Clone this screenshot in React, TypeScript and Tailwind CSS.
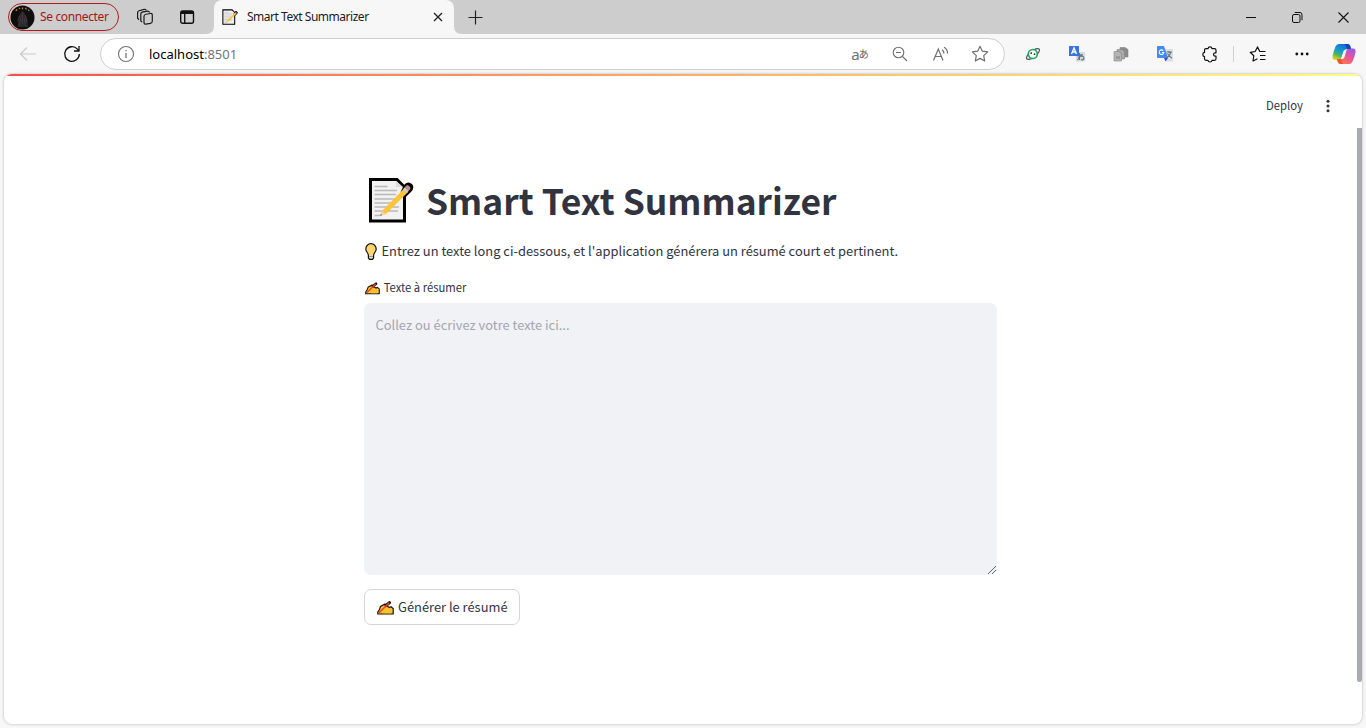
import type { ReactNode } from "react";

const UI = "font-['Noto_Sans','Open_Sans',sans-serif]";
const SOURCE = "font-['Noto_Sans_CJK_SC',sans-serif]";

function MemoIcon({ className }: { className: string }) {
  return (
    <svg viewBox="0 0 46 46" className={className} fill="none">
      <path d="M2.500 2.500H29L36.500 10V44H2.500Z" fill="#f2f2f2" stroke="#000" strokeWidth="3" />
      <path d="M28 4V10H35" fill="#dcdcdc" />
      <path d="M6.500 9.500H19.500M6.500 13.500H29M6.500 17.500H28M6.500 22H27M6.500 26H27M6.500 30H31M6.500 34H30M6.500 38.500H12" stroke="#b9b9b9" strokeWidth="1.500" />
      <path d="M34 15L37 9Q40 5 43.500 8.500Q45 11 42 14L36 20Z" fill="#000" stroke="#000" strokeWidth="2.600" />
      <path d="M14 34L36 11.500L40 15L18 37L12 39Z" fill="#fcc438" />
      <path d="M14 34L18 37L12 39Z" fill="#f5cfb5" />
      <path d="M12 39L14 38L13 37Z" fill="#555" />
      <path d="M35 12.500L37 10L41 13.500L39 16Z" fill="#c8c8c8" />
      <path d="M37 10Q39 7 41.500 9.500Q43.500 11.500 41 13.500Z" fill="#c98d88" />
    </svg>
  );
}

function BulbIcon({ className }: { className: string }) {
  return (
    <svg viewBox="0 0 12 17" className={className}>
      <path d="M6 .7A5.200 5.200 0 0 0 .8 5.900C.8 8.700 3.200 9.700 3.400 12.500V15L4.500 16.300H7.500L8.600 15V12.500C8.800 9.700 11.200 8.700 11.200 5.900A5.200 5.200 0 0 0 6 .7Z" fill="#ffd66b" stroke="#111" strokeWidth="1.200" />
      <path d="M4 12H8V15H4Z" fill="#d9d9d9" />
      <path d="M4 13.500H8" stroke="#777" strokeWidth=".7" />
    </svg>
  );
}

function WritingHandIcon({ className }: { className: string }) {
  return (
    <svg viewBox="0 0 17 14" className={className}>
      <path d="M.8 13V11L2.500 8.500L3.500 5.500L8 3L10 5L12.500 6.500L14 5.800L16.200 7.500V13Z" fill="#fcc22f" stroke="#17120c" strokeWidth="1.200" />
      <path d="M9 4.500L12.500 1.600" stroke="#17120c" strokeWidth="3" strokeLinecap="round" />
      <path d="M1.600 12.200L12.200 1.900" stroke="#ee432b" strokeWidth="1.500" />
      <path d="M6.500 12.300L7.200 9.500L10.500 8L9.500 10.500H14V12.300Z" fill="#fcc22f" />
    </svg>
  );
}

function Slot({ className, children }: { className: string; children: ReactNode }) {
  return <div className={`flex h-6 shrink-0 items-center justify-center ${className}`}>{children}</div>;
}

function Avatar() {
  return (
    <svg viewBox="0 0 26 26" className="ml-px size-[25px] shrink-0">
      <circle cx="13" cy="13" r="12.500" fill="#100d0d" />
      <path d="M8 23L9 12L11 8Q13 5 15 8L17 12L19 23Z" fill="#2a282b" />
      <path d="M10 11L8 17M16 11L18 18M13 9V20M11 14L10 21M15 14L16 21" stroke="#454348" strokeWidth=".8" />
      <path d="M6 6L7.500 4.500M9.500 4L10.500 3M13 2.500V4.500M16 3L17 4.500M19 5L20 6" stroke="#b9882f" strokeWidth="1.300" />
      <path d="M10.500 12H12M14 12H15.500" stroke="#552324" />
    </svg>
  );
}

function TabStrip() {
  return (
    <div className="flex h-[34px] shrink-0 bg-[#cdcdcd]">
      <div className="flex w-[214px] shrink-0 items-center pl-2">
        <div className="flex h-7 w-[111px] shrink-0 items-center rounded-full border border-[#b01c20] text-[12px] text-[#a41619]">
          <Avatar />
          <span className="ml-[5px] whitespace-nowrap tracking-[-0.36px]">Se connecter</span>
        </div>
        <svg viewBox="0 0 18 18" className="ml-[17px] size-[18px]" fill="none" stroke="#1b1b1b" strokeWidth="1.200" strokeLinecap="round">
          <rect x="8" y="6" width="8.300" height="9.800" rx="1.800" transform="skewY(-9) translate(0 1.800)" />
          <path d="M5.800 13.700L4.800 13V6Q4.800 4.600 6.200 4.200L11.500 3.100Q13 2.900 13.300 4.200" />
          <path d="M2.700 11.300L1.600 10.300V4.600Q1.600 3.200 3 2.700L8.200 1.300Q9.600 1 10 2" />
        </svg>
        <svg viewBox="0 0 16 16" className="ml-[25px] size-4" fill="none" stroke="#111" strokeWidth="1.400">
          <rect x="1.700" y="1.900" width="12.800" height="12.400" rx="2" />
          <path d="M2 3.500H14.500" strokeWidth="3" />
          <path d="M5.700 4V14" />
        </svg>
      </div>
      <div className="relative flex w-60 shrink-0 items-center rounded-t-[8px] bg-[#f7f7f7] pl-2">
        <svg viewBox="0 0 8 8" className="absolute bottom-0 -left-2 size-2"><path d="M8 0V8H0Q8 8 8 0Z" fill="#f7f7f7" /></svg>
        <svg viewBox="0 0 8 8" className="absolute -right-2 bottom-0 size-2"><path d="M0 0V8H8Q0 8 0 0Z" fill="#f7f7f7" /></svg>
        <MemoIcon className="size-4" />
        <span className="ml-[9px] w-[186px] whitespace-nowrap text-[12px] tracking-[-0.48px] text-[#1b1b1b]">Smart Text Summarizer</span>
        <svg viewBox="0 0 10 10" className="size-[10px]" stroke="#222" strokeWidth="1.300"><path d="M1 1L9 9M9 1L1 9" /></svg>
      </div>
      <div className="flex flex-1 items-center pl-[14px]">
        <svg viewBox="0 0 15 15" className="size-[15px]" stroke="#222" strokeWidth="1.200"><path d="M7.500 .5V14.500M.5 7.500H14.500" /></svg>
      </div>
      <div className="flex items-center pr-[17px]">
        <svg viewBox="0 0 10 10" className="size-[10px]" stroke="#111"><path d="M0 5.500H10" /></svg>
        <svg viewBox="0 0 11 11" className="ml-9 size-[11px]" fill="none" stroke="#111"><rect x=".5" y="2.500" width="7.500" height="8" rx="1.500" /><path d="M2.800 .5H8Q10 .5 10 3V8.200" /></svg>
        <svg viewBox="0 0 11 11" className="ml-[35px] size-[11px]" stroke="#111" strokeWidth="1.100"><path d="M.5 .5L10.500 10.500M10.500 .5L.5 10.500" /></svg>
      </div>
    </div>
  );
}

function AddressBar() {
  return (
    <div className="flex h-8 w-[905px] shrink-0 items-center rounded-full border border-[#cecfd1] bg-white pl-4">
      <svg viewBox="0 0 18 18" className="size-[18px]" fill="none" stroke="#717171" strokeWidth="1.100">
        <circle cx="9" cy="9" r="7.500" /><path d="M9 8V13M9 5V6.300" strokeWidth="1.300" />
      </svg>
      <span className="ml-[14px] w-[697px] pt-px text-[13px] text-[#737373]"><span className="text-black">localhost</span>:8501</span>
      <Slot className="w-7">
        <span className="-mt-px text-[15px] leading-5 text-[#707070]">a</span><span className="-ml-px font-['Noto_Sans_CJK_JP',sans-serif] text-[10px] leading-5 text-[#606060]">あ</span>
      </Slot>
      <Slot className="ml-3 w-7">
        <svg viewBox="0 0 16 16" className="size-4" fill="none" stroke="#707070" strokeWidth="1.100"><circle cx="6.500" cy="6.500" r="5.300" /><path d="M4 6.500H9M10.500 10.500L15 15" /></svg>
      </Slot>
      <Slot className="ml-3 w-7">
        <svg viewBox="0 0 18 16" className="ml-0.5 h-4 w-[18px]" fill="none" stroke="#707070" strokeWidth="1.200"><path d="M1.500 14.500L6.300 3L11 14.500M3.200 10.500H9.400M10 3.700Q12 5 12 7.500M12 1.300Q15.800 3.500 15.500 7.500" /></svg>
      </Slot>
      <Slot className="ml-3 w-7">
        <svg viewBox="0 0 18 18" className="size-[18px]" fill="none" stroke="#707070" strokeWidth="1.200" strokeLinejoin="round"><path d="M9 1.300L11.300 6.200L16.700 6.900L12.700 10.600L13.700 16L9 13.400L4.300 16L5.300 10.600L1.300 6.900L6.700 6.200Z" /></svg>
      </Slot>
    </div>
  );
}

function TranslateTile() {
  return (
    <svg viewBox="0 0 16 16" className="size-4">
      <rect x="7" y="6" width="9" height="9.500" fill="#d8dce0" />
      <rect width="10" height="10" fill="#3775e4" />
      <path d="M2.500 8L5 2L7.500 8M3.500 6H6.500" fill="none" stroke="#fff" strokeWidth="1.300" />
      <path d="M8 9H14M10.500 7V14M13 8L8.500 14M8.500 11Q15 9 15 12Q15 14 12 14" fill="none" stroke="#5b7585" strokeWidth="1.100" />
    </svg>
  );
}

function GoogleTranslate() {
  return (
    <svg viewBox="0 0 16 16" className="size-4">
      <path d="M6 3H16V15.500H9Z" fill="#dedede" />
      <path d="M0 1Q0 0 1 0H7L11 12H1Q0 12 0 11Z" fill="#4488f5" />
      <path d="M7 12H11L8.500 15.500Z" fill="#304fbc" />
      <path d="M6.300 4.700A2.300 2.300 0 1 0 6.800 6.500H4.800" fill="none" stroke="#fff" strokeWidth="1.100" />
      <path d="M9.500 6H15M12 5V7M14 6Q13 10 9.500 12M10.500 7.500Q12 10.500 15 12" fill="none" stroke="#607784" strokeWidth="1.100" />
    </svg>
  );
}

function Copilot() {
  return (
    <svg viewBox="0 0 24 22" className="h-[22px] w-6">
      <defs>
        <linearGradient id="cool" x1=".7" y1="0" x2=".2" y2="1"><stop stopColor="#1763dc" /><stop offset=".45" stopColor="#119dce" /><stop offset=".7" stopColor="#48b56b" /><stop offset="1" stopColor="#e8d90a" /></linearGradient>
        <linearGradient id="warm" x1=".8" y1="0" x2=".2" y2="1"><stop stopColor="#9b55ee" /><stop offset=".5" stopColor="#e75792" /><stop offset="1" stopColor="#ff8047" /></linearGradient>
      </defs>
      <path d="M7 1H15.500Q17.500 1 18.200 3L19 6H15Q12.500 6 11.700 8.500L9.500 15Q8.500 17 6.500 17H3Q0 17 .5 13Q1.500 8 3.500 3.500Q4.500 1 7 1Z" fill="url(#cool)" />
      <path d="M17 21H8.500Q6.500 21 5.800 19L5 16H9Q11.500 16 12.300 13.500L14.500 7Q15.500 5.500 17.500 5.500H21Q24 5.500 23.500 9.500Q22.500 14 20.500 18.500Q19.500 21 17 21Z" fill="url(#warm)" />
      <path d="M13 1H15.500Q17.500 1 18.200 3L19 6H15Z" fill="#1048b8" />
      <path d="M11 21H8.500Q6.500 21 5.800 19L5 16H9Z" fill="#f15532" />
      <path d="M11.800 7.500H14.300L12.300 14.500Q11.800 16 9.200 15.500Z" fill="#f7f7f7" />
    </svg>
  );
}

function Toolbar() {
  return (
    <div className="flex h-10 shrink-0 items-center bg-[#f7f7f7]">
      <Slot className="ml-4 w-6">
        <svg viewBox="0 0 18 16" className="h-4 w-[18px]" fill="none" stroke="#cacaca" strokeWidth="1.200"><path d="M17 8H1.500M8 1.500L1.500 8L8 14.500" /></svg>
      </Slot>
      <Slot className="ml-5 w-6">
        <svg viewBox="0 0 18 18" className="size-[18px]" fill="none" stroke="#111" strokeWidth="1.300"><path d="M16.300 9A7.300 7.300 0 1 1 14.400 4.100L16 5.800M16 1V6H11" /></svg>
      </Slot>
      <div className="w-4 shrink-0" />
      <AddressBar />
      <Slot className="ml-4 w-6">
        <svg viewBox="0 0 16 16" className="size-4" fill="none">
          <ellipse cx="8" cy="8" rx="7.900" ry="3.100" transform="rotate(-38 8 8)" stroke="#46515b" strokeWidth="1.200" />
          <circle cx="7.800" cy="8" r="4.500" fill="#fff" stroke="#24a35b" strokeWidth="1.700" />
          <circle cx="6.200" cy="7.200" r=".9" fill="#26333b" /><circle cx="9.500" cy="8.200" r=".9" fill="#26333b" />
        </svg>
      </Slot>
      <Slot className="ml-5 w-6"><TranslateTile /></Slot>
      <Slot className="ml-5 w-6">
        <svg viewBox="0 0 16 16" className="size-4" stroke="#858585" strokeWidth=".6"><path d="M7 1.500H12L15 3.500V11H7Z" fill="#8b8b8b" /><path d="M4 3.500H9L11.500 5.500V13H4Z" fill="#aaa" /><path d="M1 5.500H6L8.500 7.500V15H1Z" fill="#b5b5b5" /><path d="M3 10H7V13H3Z" fill="#999" stroke="none" /></svg>
      </Slot>
      <Slot className="ml-5 w-6"><GoogleTranslate /></Slot>
      <Slot className="ml-[21px] w-6">
        <svg viewBox="0 0 16 17" className="h-[17px] w-4" fill="none" stroke="#111" strokeWidth="1.200" strokeLinejoin="round">
          <path d="M4 2.700H6Q6.200 .9 8 .9T10 2.700H12.500Q14 2.700 14 4.200V6.800H13Q11.500 7 11.500 8.500T13 10.200H14V12.800Q14 14.300 12.500 14.300H10Q9.800 16 8 16T6 14.300H4Q2.500 14.300 2.500 12.800V10.600Q.8 10.400 .8 8.500T2.500 6.400V4.200Q2.500 2.700 4 2.700Z" />
        </svg>
      </Slot>
      <div className="ml-[11px] h-4 w-px shrink-0 bg-[#cfcfcf]" />
      <Slot className="ml-3 w-6">
        <svg viewBox="0 0 18 17" className="h-[17px] w-[18px]" fill="none" stroke="#111" strokeWidth="1.200" strokeLinejoin="round">
          <path d="M16.500 5.500H10.800L8.500 .9L6.200 5.500L1.200 6.300L4.800 9.800L4 15L8.500 12.800M11 9.500H16.500M11 13.500H16.500" />
        </svg>
      </Slot>
      <Slot className="ml-5 w-6">
        <svg viewBox="0 0 14 4" className="h-1 w-[14px]" fill="#111"><circle cx="1.800" cy="2" r="1.400" /><circle cx="7" cy="2" r="1.400" /><circle cx="12.200" cy="2" r="1.400" /></svg>
      </Slot>
      <Slot className="ml-[18px] w-6"><Copilot /></Slot>
    </div>
  );
}

function Summarizer() {
  return (
    <main className={`ml-[360px] mt-[38px] w-[633px] text-[#31333f] ${SOURCE}`}>
      <h1 className="flex h-[54px] items-center whitespace-nowrap pb-0.5 text-[35.450px] leading-[52px] font-bold">
        <MemoIcon className="mr-3 ml-1 size-[46px]" />
        Smart Text Summarizer
      </h1>
      <p className="mt-[11px] flex h-6 items-center whitespace-nowrap text-[12.9px] leading-6">
        <BulbIcon className="mr-[4.500px] ml-px h-[17px] w-3" />
        Entrez un texte long ci-dessous, et l'application générera un résumé court et pertinent.
      </p>
      <label className="mt-[14px] flex h-5 items-center text-[11.250px] leading-5">
        <WritingHandIcon className="mt-[3px] mr-[3.700px] ml-px h-[13px] w-[15px]" />
        Texte à résumer
      </label>
      <div className="relative mt-[6px] h-[272px] rounded-[7px] bg-[#f0f2f6] px-3 py-[11px] text-[12.9px] leading-[22px] text-[#a4a6ae]">
        <span className="-ml-[0.5px]">Collez ou écrivez votre texte ici...</span>
        <svg viewBox="0 0 8 8" className="absolute right-[1px] bottom-[1px] size-2" stroke="#60636b"><path d="M0 8L8 0M4 8L8 4" /></svg>
      </div>
      <button className="mt-[14px] flex h-9 w-[156px] items-center rounded-[7px] border border-[#d6d6d9] bg-white pl-3 text-[12.9px] leading-5 whitespace-nowrap">
        <WritingHandIcon className="mt-0.5 mr-1 h-[14px] w-[17px]" />
        Générer le résumé
      </button>
    </main>
  );
}

export default function App() {
  return (
    <div className={`flex h-[728px] w-[1366px] flex-col overflow-hidden bg-[#f7f7f7] ${UI}`}>
      <TabStrip />
      <Toolbar />
      <div className="relative ml-1 h-[650px] w-[1358px] overflow-hidden rounded-[8px] bg-white shadow-[0_0_3px_rgba(0,0,0,0.28)]">
        <div className="h-[2px] bg-linear-to-r from-[#ff4b4b] to-[#fffd80]" />
        <header className={`flex h-[60px] items-center justify-end pr-[32px] text-[#31333f] ${SOURCE}`}>
          <span className="-mt-0.5 text-[11.300px] leading-5">Deploy</span>
          <svg viewBox="0 0 4 14" className="ml-[23px] h-[14px] w-1" fill="#31333f"><circle cx="2" cy="2.300" r="1.500" /><circle cx="2" cy="7" r="1.500" /><circle cx="2" cy="11.700" r="1.500" /></svg>
        </header>
        <Summarizer />
        <div className="absolute top-[54px] right-0 h-[554px] w-[5px] rounded-b-[2px] bg-[#a9abb0]" />
      </div>
    </div>
  );
}
